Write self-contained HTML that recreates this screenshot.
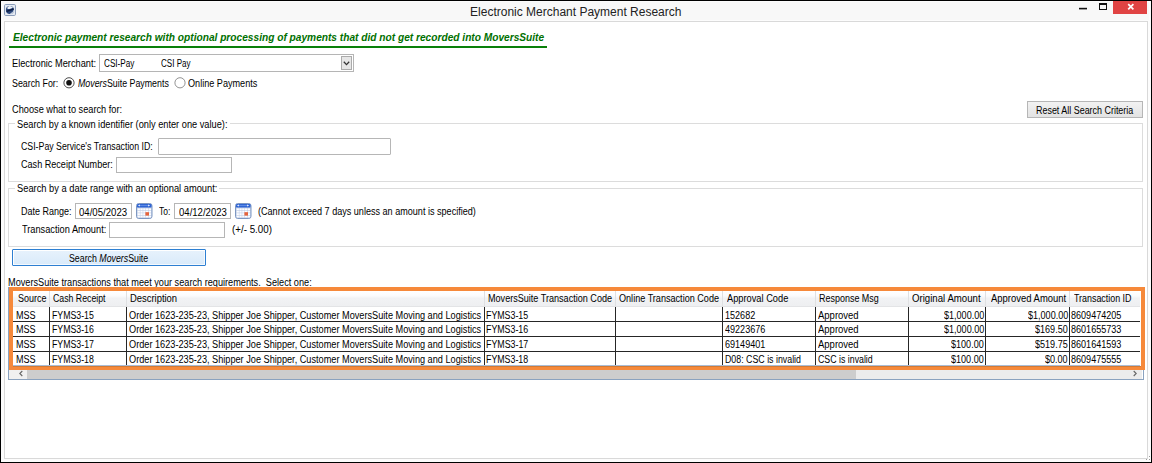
<!DOCTYPE html>
<html><head><meta charset="utf-8"><style>
html,body{margin:0;padding:0;width:1152px;height:463px;overflow:hidden;background:#fff}
div{position:absolute}
.t{white-space:pre;font-family:"Liberation Sans",sans-serif;line-height:20px}
</style></head><body>
<div style="left:0px;top:0px;width:1152px;height:463px;background:#000"></div>
<div style="left:1px;top:1px;width:1150px;height:461px;background:#fcfcfc"></div>
<div style="left:3px;top:2px;width:1146px;height:18px;background:#f8f8f8"></div>
<svg style="position:absolute;left:4px;top:4px" width="12" height="12" viewBox="0 0 12 12"><rect x="0.5" y="0.5" width="11" height="11" rx="1.2" fill="#e6ebf2" stroke="#8a9cb9"/>
<circle cx="5.9" cy="5.9" r="4" fill="#2a467a"/>
<path d="M3 4.2 Q5.8 6.2 9 3.6 Q7.5 1.9 5.6 2 Q3.8 2.3 3 4.2 Z" fill="#eef2f8"/>
<path d="M2.6 7.4 L9.6 5" stroke="#0c1c42" stroke-width="1.4" fill="none"/>
<path d="M9.9 6.4 A4 4 0 0 1 6.4 9.9" stroke="#c3cedf" stroke-width="1.1" fill="none"/></svg>
<div class="t" style="left:470.04px;top:2.00px;font-size:12px;color:#222;">Electronic Merchant Payment Research</div>
<svg style="position:absolute;left:1078px;top:6px" width="10" height="5" viewBox="0 0 10 5"><rect x="1" y="1.8" width="8" height="1.6" fill="#111"/></svg>
<svg style="position:absolute;left:1098px;top:2px" width="11" height="9" viewBox="0 0 11 9"><rect x="1.5" y="1.5" width="7" height="6" fill="none" stroke="#111" stroke-width="1"/><rect x="1" y="1" width="8" height="2" fill="#111"/></svg>
<div style="left:1113px;top:1px;width:34px;height:13px;background:#e04343"></div>
<svg style="position:absolute;left:1127px;top:3px" width="8" height="8" viewBox="0 0 8 8"><path d="M1.2 1.2 L6.4 6.4 M6.4 1.2 L1.2 6.4" stroke="#fff" stroke-width="1.7"/></svg>
<div style="left:4px;top:21px;width:1144px;height:438px;background:#fff;border:1px solid #d9d9d9;box-sizing:border-box"></div>
<div class="t" style="left:12.80px;top:28.00px;font-size:10.1px;color:#007000;transform:scaleX(1.0064);transform-origin:0 0;"><span style="font-weight:bold;font-style:italic">Electronic payment research with optional processing of payments that did not get recorded into MoversSuite</span></div>
<div style="left:9px;top:46px;width:538px;height:2px;background:#0a800a"></div>
<div class="t" style="left:12.06px;top:54.00px;font-size:10.0px;color:#000;transform:scaleX(0.9217);transform-origin:0 0;">Electronic Merchant:</div>
<div style="left:99px;top:54px;width:255px;height:18px;background:#fff;border:1px solid #b5b5b5;box-sizing:border-box"></div>
<div class="t" style="left:103.59px;top:54.00px;font-size:10.0px;color:#000;transform:scaleX(0.8163);transform-origin:0 0;">CSI-Pay</div>
<div class="t" style="left:161.30px;top:54.00px;font-size:10.0px;color:#000;transform:scaleX(0.8039);transform-origin:0 0;">CSI Pay</div>
<div style="left:341px;top:56px;width:11px;height:14px;background:#e6e6e6;border:1px solid #ababab;box-sizing:border-box"></div>
<svg style="position:absolute;left:343px;top:61px" width="7" height="5" viewBox="0 0 7 5"><path d="M0.8 0.8 L3.5 3.6 L6.2 0.8" stroke="#333" stroke-width="1.3" fill="none"/></svg>
<div class="t" style="left:11.90px;top:74.00px;font-size:10.0px;color:#000;transform:scaleX(0.8850);transform-origin:0 0;">Search For:</div>
<svg style="position:absolute;left:63px;top:77px" width="12" height="12" viewBox="0 0 12 12"><circle cx="6" cy="5.8" r="5.1" fill="#fff" stroke="#3a3a3a" stroke-width="0.9"/><circle cx="6" cy="5.8" r="2.8" fill="#111"/></svg>
<div class="t" style="left:77.54px;top:74.00px;font-size:10.0px;color:#000;transform:scaleX(0.8830);transform-origin:0 0;"><span style="font-style:italic">Movers</span>Suite Payments</div>
<svg style="position:absolute;left:173.5px;top:77px" width="12" height="12" viewBox="0 0 12 12"><circle cx="6" cy="5.8" r="5.1" fill="#fff" stroke="#777" stroke-width="0.8"/></svg>
<div class="t" style="left:187.79px;top:74.00px;font-size:10.0px;color:#000;transform:scaleX(0.9104);transform-origin:0 0;">Online Payments</div>
<div class="t" style="left:12.24px;top:100.00px;font-size:10.0px;color:#000;transform:scaleX(0.9213);transform-origin:0 0;">Choose what to search for:</div>
<div style="left:1027px;top:101px;width:116px;height:17px;background:linear-gradient(#f2f2f2,#e3e3e3);border:1px solid #b6b6b6;box-sizing:border-box"></div>
<div class="t" style="left:1035.99px;top:101.00px;font-size:10.0px;color:#000;transform:scaleX(0.8927);transform-origin:0 0;">Reset All Search Criteria</div>
<div style="left:8px;top:123px;width:1135px;height:59px;border:1px solid #dcdcdc;box-sizing:border-box"></div>
<div style="left:15px;top:121px;width:215px;height:4px;background:#fff"></div>
<div class="t" style="left:17.48px;top:115.00px;font-size:10.0px;color:#000;transform:scaleX(0.9234);transform-origin:0 0;">Search by a known identifier (only enter one value):</div>
<div class="t" style="left:21.46px;top:137.00px;font-size:10.0px;color:#000;transform:scaleX(0.8767);transform-origin:0 0;">CSI-Pay Service&#x27;s Transaction ID:</div>
<div style="left:158px;top:138px;width:233px;height:17px;background:#fff;border:1px solid #b6b6b6;box-sizing:border-box;border-radius:1px"></div>
<div class="t" style="left:21.45px;top:155.00px;font-size:10.0px;color:#000;transform:scaleX(0.9073);transform-origin:0 0;">Cash Receipt Number:</div>
<div style="left:116px;top:157px;width:116px;height:16px;background:#fff;border:1px solid #b6b6b6;box-sizing:border-box"></div>
<div style="left:8px;top:188px;width:1135px;height:59px;border:1px solid #dcdcdc;box-sizing:border-box"></div>
<div style="left:15px;top:186px;width:204px;height:4px;background:#fff"></div>
<div class="t" style="left:17.48px;top:179.00px;font-size:10.0px;color:#000;transform:scaleX(0.9315);transform-origin:0 0;">Search by a date range with an optional amount:</div>
<div class="t" style="left:21.38px;top:202.00px;font-size:10.0px;color:#000;transform:scaleX(0.9007);transform-origin:0 0;">Date Range:</div>
<div style="left:75px;top:203px;width:57px;height:16px;background:#fff;border:1px solid #b6b6b6;box-sizing:border-box"></div>
<div class="t" style="left:79.22px;top:203.00px;font-size:10.0px;color:#000;transform:scaleX(0.9604);transform-origin:0 0;">04/05/2023</div>
<svg style="position:absolute;left:135.5px;top:203px" width="17" height="16" viewBox="0 0 17 16"><rect x="0.5" y="0.5" width="15.5" height="15" rx="2.2" fill="#bfcde6" stroke="#7d97c2"/>
<rect x="1" y="1" width="14.5" height="3.6" rx="1.2" fill="#2f64d4"/>
<rect x="3" y="2" width="10" height="1" fill="#5b8ae6"/>
<path d="M2 2.6 L3.8 1.6 L3.8 3.6 Z M14 2.6 L12.2 1.6 L12.2 3.6 Z" fill="#fff"/>
<g fill="#fdfdff">
<rect x="1.6" y="5.4" width="2.3" height="1.8"/><rect x="4.4" y="5.4" width="2.3" height="1.8"/><rect x="7.2" y="5.4" width="2.3" height="1.8"/><rect x="10" y="5.4" width="2.3" height="1.8"/><rect x="12.8" y="5.4" width="2.3" height="1.8"/>
<rect x="1.6" y="7.8" width="2.3" height="1.8"/><rect x="4.4" y="7.8" width="2.3" height="1.8"/><rect x="7.2" y="7.8" width="2.3" height="1.8"/><rect x="10" y="7.8" width="2.3" height="1.8"/><rect x="12.8" y="7.8" width="2.3" height="1.8"/>
<rect x="1.6" y="10.2" width="2.3" height="1.8"/><rect x="4.4" y="10.2" width="2.3" height="1.8"/><rect x="7.2" y="10.2" width="2.3" height="1.8"/><rect x="12.8" y="10.2" width="2.3" height="1.8"/>
<rect x="1.6" y="12.6" width="2.3" height="1.8"/><rect x="4.4" y="12.6" width="2.3" height="1.8"/><rect x="7.2" y="12.6" width="2.3" height="1.8"/><rect x="10" y="12.6" width="2.3" height="1.8"/><rect x="12.8" y="12.6" width="2.3" height="1.8"/>
</g>
<rect x="9.4" y="9.2" width="3.6" height="3.4" fill="#e5633b"/></svg>
<div class="t" style="left:159.43px;top:202.00px;font-size:10.0px;color:#000;transform:scaleX(0.8525);transform-origin:0 0;">To:</div>
<div style="left:174px;top:203px;width:57px;height:16px;background:#fff;border:1px solid #b6b6b6;box-sizing:border-box"></div>
<div class="t" style="left:178.52px;top:203.00px;font-size:10.0px;color:#000;transform:scaleX(0.9563);transform-origin:0 0;">04/12/2023</div>
<svg style="position:absolute;left:234.5px;top:203px" width="17" height="16" viewBox="0 0 17 16"><rect x="0.5" y="0.5" width="15.5" height="15" rx="2.2" fill="#bfcde6" stroke="#7d97c2"/>
<rect x="1" y="1" width="14.5" height="3.6" rx="1.2" fill="#2f64d4"/>
<rect x="3" y="2" width="10" height="1" fill="#5b8ae6"/>
<path d="M2 2.6 L3.8 1.6 L3.8 3.6 Z M14 2.6 L12.2 1.6 L12.2 3.6 Z" fill="#fff"/>
<g fill="#fdfdff">
<rect x="1.6" y="5.4" width="2.3" height="1.8"/><rect x="4.4" y="5.4" width="2.3" height="1.8"/><rect x="7.2" y="5.4" width="2.3" height="1.8"/><rect x="10" y="5.4" width="2.3" height="1.8"/><rect x="12.8" y="5.4" width="2.3" height="1.8"/>
<rect x="1.6" y="7.8" width="2.3" height="1.8"/><rect x="4.4" y="7.8" width="2.3" height="1.8"/><rect x="7.2" y="7.8" width="2.3" height="1.8"/><rect x="10" y="7.8" width="2.3" height="1.8"/><rect x="12.8" y="7.8" width="2.3" height="1.8"/>
<rect x="1.6" y="10.2" width="2.3" height="1.8"/><rect x="4.4" y="10.2" width="2.3" height="1.8"/><rect x="7.2" y="10.2" width="2.3" height="1.8"/><rect x="12.8" y="10.2" width="2.3" height="1.8"/>
<rect x="1.6" y="12.6" width="2.3" height="1.8"/><rect x="4.4" y="12.6" width="2.3" height="1.8"/><rect x="7.2" y="12.6" width="2.3" height="1.8"/><rect x="10" y="12.6" width="2.3" height="1.8"/><rect x="12.8" y="12.6" width="2.3" height="1.8"/>
</g>
<rect x="9.4" y="9.2" width="3.6" height="3.4" fill="#e5633b"/></svg>
<div class="t" style="left:257.76px;top:202.00px;font-size:10.0px;color:#000;transform:scaleX(0.9071);transform-origin:0 0;">(Cannot exceed 7 days unless an amount is specified)</div>
<div class="t" style="left:22.02px;top:220.00px;font-size:10.0px;color:#000;transform:scaleX(0.9224);transform-origin:0 0;">Transaction Amount:</div>
<div style="left:109px;top:222px;width:116px;height:16px;background:#fff;border:1px solid #b6b6b6;box-sizing:border-box"></div>
<div class="t" style="left:231.51px;top:220.00px;font-size:10.0px;color:#000;transform:scaleX(0.9773);transform-origin:0 0;">(+/- 5.00)</div>
<div style="left:12px;top:249px;width:194px;height:17px;background:linear-gradient(#e7f2fc,#d9eafa);border:1px solid #2d7fd2;box-sizing:border-box;box-shadow:inset 1px 1px 0 #fff, inset -1px -1px 0 #f4f9fe;border-radius:1px"></div>
<div class="t" style="left:69.30px;top:249.00px;font-size:10.0px;color:#000;transform:scaleX(0.8794);transform-origin:0 0;">Search <span style="font-style:italic">Movers</span>Suite</div>
<div class="t" style="left:8.27px;top:273.00px;font-size:10.0px;color:#000;transform:scaleX(0.9167);transform-origin:0 0;">MoversSuite transactions that meet your search requirements.  Select one:</div>
<div style="left:8px;top:287px;width:1136px;height:93px;background:#fff;border:1px solid #8aa2bf;box-sizing:border-box"></div>
<div style="left:13px;top:291px;width:1127px;height:16px;background:linear-gradient(#ffffff 0%,#fbfbfc 30%,#f1f2f4 45%,#eeeff1 100%)"></div>
<div style="left:13px;top:306px;width:1127px;height:1px;background:#e3e4e6"></div>
<div style="left:49px;top:291px;width:1px;height:16px;background:#dfe0e2"></div>
<div style="left:126px;top:291px;width:1px;height:16px;background:#dfe0e2"></div>
<div style="left:484px;top:291px;width:1px;height:16px;background:#dfe0e2"></div>
<div style="left:615px;top:291px;width:1px;height:16px;background:#dfe0e2"></div>
<div style="left:722px;top:291px;width:1px;height:16px;background:#dfe0e2"></div>
<div style="left:815px;top:291px;width:1px;height:16px;background:#dfe0e2"></div>
<div style="left:908px;top:291px;width:1px;height:16px;background:#dfe0e2"></div>
<div style="left:985px;top:291px;width:1px;height:16px;background:#dfe0e2"></div>
<div style="left:1069px;top:291px;width:1px;height:16px;background:#dfe0e2"></div>
<div class="t" style="left:17.50px;top:289.00px;font-size:10.0px;color:#000;transform:scaleX(0.8976);transform-origin:0 0;">Source</div>
<div class="t" style="left:53.26px;top:289.00px;font-size:10.0px;color:#000;transform:scaleX(0.8747);transform-origin:0 0;">Cash Receipt</div>
<div class="t" style="left:130.45px;top:289.00px;font-size:10.0px;color:#000;transform:scaleX(0.9413);transform-origin:0 0;">Description</div>
<div class="t" style="left:487.87px;top:289.00px;font-size:10.0px;color:#000;transform:scaleX(0.9070);transform-origin:0 0;">MoversSuite Transaction Code</div>
<div class="t" style="left:619.19px;top:289.00px;font-size:10.0px;color:#000;transform:scaleX(0.9088);transform-origin:0 0;">Online Transaction Code</div>
<div class="t" style="left:726.80px;top:289.00px;font-size:10.0px;color:#000;transform:scaleX(0.9269);transform-origin:0 0;">Approval Code</div>
<div class="t" style="left:819.28px;top:289.00px;font-size:10.0px;color:#000;transform:scaleX(0.8966);transform-origin:0 0;">Response Msg</div>
<div class="t" style="left:912.07px;top:289.00px;font-size:10.0px;color:#000;transform:scaleX(0.9646);transform-origin:0 0;">Original Amount</div>
<div class="t" style="left:990.50px;top:289.00px;font-size:10.0px;color:#000;transform:scaleX(0.9458);transform-origin:0 0;">Approved Amount</div>
<div class="t" style="left:1073.62px;top:289.00px;font-size:10.0px;color:#000;transform:scaleX(0.8891);transform-origin:0 0;">Transaction ID</div>
<div style="left:13px;top:321px;width:1127px;height:1px;background:#262626"></div>
<div style="left:13px;top:336px;width:1127px;height:1px;background:#262626"></div>
<div style="left:13px;top:351px;width:1127px;height:1px;background:#262626"></div>
<div style="left:49px;top:307px;width:1px;height:58px;background:#262626"></div>
<div style="left:126px;top:307px;width:1px;height:58px;background:#262626"></div>
<div style="left:484px;top:307px;width:1px;height:58px;background:#262626"></div>
<div style="left:615px;top:307px;width:1px;height:58px;background:#262626"></div>
<div style="left:722px;top:307px;width:1px;height:58px;background:#262626"></div>
<div style="left:815px;top:307px;width:1px;height:58px;background:#262626"></div>
<div style="left:908px;top:307px;width:1px;height:58px;background:#262626"></div>
<div style="left:985px;top:307px;width:1px;height:58px;background:#262626"></div>
<div style="left:1069px;top:307px;width:1px;height:58px;background:#262626"></div>
<div class="t" style="left:15.88px;top:306.00px;font-size:10.0px;color:#000;transform:scaleX(0.9050);transform-origin:0 0;">MSS</div>
<div class="t" style="left:51.80px;top:306.00px;font-size:10.0px;color:#000;transform:scaleX(0.8755);transform-origin:0 0;">FYMS3-15</div>
<div class="t" style="left:129.19px;top:306.00px;font-size:10.0px;color:#000;transform:scaleX(0.9168);transform-origin:0 0;">Order 1623-235-23, Shipper Joe Shipper, Customer MoversSuite Moving and Logistics</div>
<div class="t" style="left:486.09px;top:306.00px;font-size:10.0px;color:#000;transform:scaleX(0.8820);transform-origin:0 0;">FYMS3-15</div>
<div class="t" style="left:724.92px;top:306.00px;font-size:10.0px;color:#000;transform:scaleX(0.9050);transform-origin:0 0;">152682</div>
<div class="t" style="left:818.00px;top:306.00px;font-size:10.0px;color:#000;transform:scaleX(0.9490);transform-origin:0 0;">Approved</div>
<div class="t" style="left:943.84px;top:306.00px;font-size:10.0px;color:#000;transform:scaleX(0.9050);transform-origin:0 0;">$1,000.00</div>
<div class="t" style="left:1027.84px;top:306.00px;font-size:10.0px;color:#000;transform:scaleX(0.9050);transform-origin:0 0;">$1,000.00</div>
<div class="t" style="left:1071.39px;top:306.00px;font-size:10.0px;color:#000;transform:scaleX(0.9050);transform-origin:0 0;">8609474205</div>
<div class="t" style="left:15.88px;top:320.00px;font-size:10.0px;color:#000;transform:scaleX(0.9050);transform-origin:0 0;">MSS</div>
<div class="t" style="left:51.80px;top:320.00px;font-size:10.0px;color:#000;transform:scaleX(0.8755);transform-origin:0 0;">FYMS3-16</div>
<div class="t" style="left:129.19px;top:320.00px;font-size:10.0px;color:#000;transform:scaleX(0.9168);transform-origin:0 0;">Order 1623-235-23, Shipper Joe Shipper, Customer MoversSuite Moving and Logistics</div>
<div class="t" style="left:486.09px;top:320.00px;font-size:10.0px;color:#000;transform:scaleX(0.8820);transform-origin:0 0;">FYMS3-16</div>
<div class="t" style="left:725.42px;top:320.00px;font-size:10.0px;color:#000;transform:scaleX(0.9050);transform-origin:0 0;">49223676</div>
<div class="t" style="left:818.00px;top:320.00px;font-size:10.0px;color:#000;transform:scaleX(0.9490);transform-origin:0 0;">Approved</div>
<div class="t" style="left:943.84px;top:320.00px;font-size:10.0px;color:#000;transform:scaleX(0.9050);transform-origin:0 0;">$1,000.00</div>
<div class="t" style="left:1035.40px;top:320.00px;font-size:10.0px;color:#000;transform:scaleX(0.9050);transform-origin:0 0;">$169.50</div>
<div class="t" style="left:1071.39px;top:320.00px;font-size:10.0px;color:#000;transform:scaleX(0.9050);transform-origin:0 0;">8601655733</div>
<div class="t" style="left:15.88px;top:335.00px;font-size:10.0px;color:#000;transform:scaleX(0.9050);transform-origin:0 0;">MSS</div>
<div class="t" style="left:51.80px;top:335.00px;font-size:10.0px;color:#000;transform:scaleX(0.8774);transform-origin:0 0;">FYMS3-17</div>
<div class="t" style="left:129.19px;top:335.00px;font-size:10.0px;color:#000;transform:scaleX(0.9168);transform-origin:0 0;">Order 1623-235-23, Shipper Joe Shipper, Customer MoversSuite Moving and Logistics</div>
<div class="t" style="left:486.09px;top:335.00px;font-size:10.0px;color:#000;transform:scaleX(0.8839);transform-origin:0 0;">FYMS3-17</div>
<div class="t" style="left:725.15px;top:335.00px;font-size:10.0px;color:#000;transform:scaleX(0.9050);transform-origin:0 0;">69149401</div>
<div class="t" style="left:818.00px;top:335.00px;font-size:10.0px;color:#000;transform:scaleX(0.9490);transform-origin:0 0;">Approved</div>
<div class="t" style="left:951.40px;top:335.00px;font-size:10.0px;color:#000;transform:scaleX(0.9050);transform-origin:0 0;">$100.00</div>
<div class="t" style="left:1035.45px;top:335.00px;font-size:10.0px;color:#000;transform:scaleX(0.9050);transform-origin:0 0;">$519.75</div>
<div class="t" style="left:1071.39px;top:335.00px;font-size:10.0px;color:#000;transform:scaleX(0.9050);transform-origin:0 0;">8601641593</div>
<div class="t" style="left:15.88px;top:350.00px;font-size:10.0px;color:#000;transform:scaleX(0.9050);transform-origin:0 0;">MSS</div>
<div class="t" style="left:51.80px;top:350.00px;font-size:10.0px;color:#000;transform:scaleX(0.8755);transform-origin:0 0;">FYMS3-18</div>
<div class="t" style="left:129.19px;top:350.00px;font-size:10.0px;color:#000;transform:scaleX(0.9168);transform-origin:0 0;">Order 1623-235-23, Shipper Joe Shipper, Customer MoversSuite Moving and Logistics</div>
<div class="t" style="left:486.09px;top:350.00px;font-size:10.0px;color:#000;transform:scaleX(0.8820);transform-origin:0 0;">FYMS3-18</div>
<div class="t" style="left:724.89px;top:350.00px;font-size:10.0px;color:#000;transform:scaleX(0.8819);transform-origin:0 0;">D08: CSC is invalid</div>
<div class="t" style="left:817.56px;top:350.00px;font-size:10.0px;color:#000;transform:scaleX(0.8789);transform-origin:0 0;">CSC is invalid</div>
<div class="t" style="left:951.40px;top:350.00px;font-size:10.0px;color:#000;transform:scaleX(0.9050);transform-origin:0 0;">$100.00</div>
<div class="t" style="left:1045.49px;top:350.00px;font-size:10.0px;color:#000;transform:scaleX(0.9050);transform-origin:0 0;">$0.00</div>
<div class="t" style="left:1071.39px;top:350.00px;font-size:10.0px;color:#000;transform:scaleX(0.9050);transform-origin:0 0;">8609475555</div>
<div style="left:13px;top:365px;width:1127px;height:1px;background:#a9bdd6"></div>
<div style="left:9px;top:370px;width:1133px;height:9px;background:#ececec"></div>
<div style="left:27px;top:370px;width:829px;height:9px;background:#cdcdcd"></div>
<div style="left:9px;top:370px;width:18px;height:9px;background:#f0f0f0"></div>
<svg style="position:absolute;left:18px;top:369.5px" width="6" height="7" viewBox="0 0 6 7"><path d="M4.3 1 L1.8 3.5 L4.3 6" stroke="#666" stroke-width="1.1" fill="none"/></svg>
<svg style="position:absolute;left:1132px;top:369.5px" width="6" height="7" viewBox="0 0 6 7"><path d="M1.7 1 L4.2 3.5 L1.7 6" stroke="#666" stroke-width="1.1" fill="none"/></svg>
<div style="left:9px;top:287px;width:1136px;height:4px;background:#f6893a"></div>
<div style="left:9px;top:366px;width:1136px;height:4px;background:#f6893a"></div>
<div style="left:13px;top:366px;width:1128px;height:1px;background:#d27a35"></div>
<div style="left:9px;top:287px;width:4px;height:83px;background:#f6893a"></div>
<div style="left:1141px;top:287px;width:4px;height:83px;background:#f6893a"></div>
<div style="left:1149px;top:456px;width:1px;height:1px;background:#9a9a9a"></div>
<div style="left:1149px;top:459px;width:1px;height:1px;background:#9a9a9a"></div>
<div style="left:1146px;top:459px;width:1px;height:1px;background:#9a9a9a"></div>
</body></html>
